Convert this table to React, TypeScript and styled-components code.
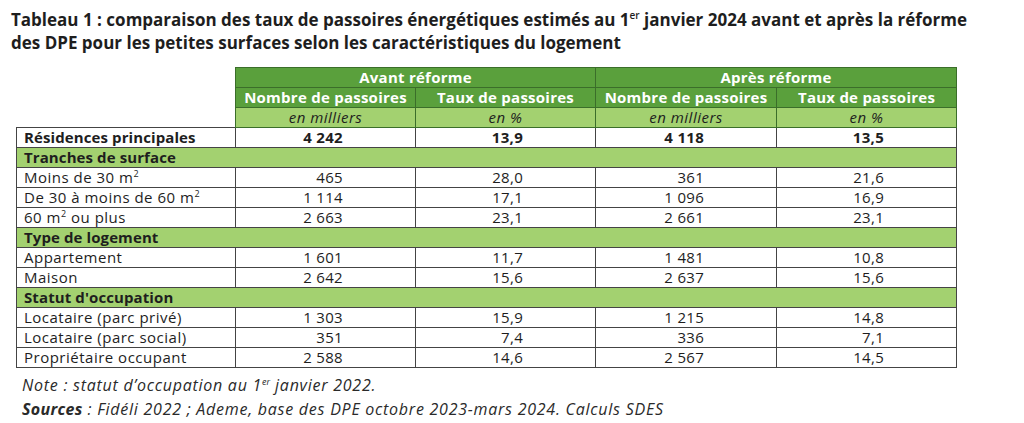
import React from "react";
import styled, { createGlobalStyle } from "styled-components";

const GlobalStyle = createGlobalStyle`
  html, body {
    margin: 0;
    padding: 0;
    background: #fff;
  }
  body {
    font-family: "Open Sans", Lato, sans-serif;
    color: #1e1e1e;
  }
`;

const Page = styled.div`
  width: 1024px;
  height: 423px;
  padding: 8px 0 0 11px;
  box-sizing: border-box;
  overflow: hidden;
`;

const Title = styled.h1`
  margin: 0 0 13px;
  font-size: 17px;
  line-height: 23px;
  font-weight: 700;
  color: #1e1e1e;
  white-space: nowrap;
  sup {
    font-size: 10px;
    line-height: 0;
    vertical-align: 7px;
    font-weight: 600;
  }
`;

const Table = styled.table`
  margin-left: 5px;
  border-collapse: collapse;
  table-layout: fixed;
  width: 940px;
  font-size: 15px;
  td,
  th {
    height: 19px;
    padding: 0;
    line-height: 19px;
    white-space: nowrap;
  }
`;

const Blank = styled.th`
  border: none;
  background: #fff;
`;

const GroupHead = styled.th<{ $shade: "dark" | "light" }>`
  background: ${(p) => (p.$shade === "dark" ? "#5aa03c" : "#a3d170")};
  color: ${(p) => (p.$shade === "dark" ? "#fff" : "#1e1e1e")};
  font-weight: ${(p) => (p.$shade === "dark" ? 700 : 400)};
  font-style: ${(p) => (p.$shade === "dark" ? "normal" : "italic")};
  letter-spacing: ${(p) => (p.$shade === "dark" ? "0.25px" : "0.5px")};
  border: 1px solid #3b6e2a;
  text-align: center;
`;

const Label = styled.td<{ $bold?: boolean }>`
  border: 1px solid #444;
  padding-left: 7px !important;
  font-weight: ${(p) => (p.$bold ? 700 : 400)};
  letter-spacing: ${(p) => (p.$bold ? "0.1px" : "0.5px")};
  sup {
    font-size: 9px;
    line-height: 0;
    vertical-align: 6px;
  }
`;

const Value = styled.td<{ $bold?: boolean }>`
  border: 1px solid #444;
  text-align: right;
  padding-right: 72px !important;
  font-weight: ${(p) => (p.$bold ? 700 : 400)};
  letter-spacing: 0.3px;
`;

const Section = styled.td`
  background: #a3d170;
  border: 1px solid #444;
  font-weight: 700;
  letter-spacing: 0.1px;
  padding-left: 7px !important;
`;

const Notes = styled.div`
  margin: 5px 0 0 11px;
  font-size: 16px;
  letter-spacing: 0.75px;
  font-style: italic;
  line-height: 24px;
  color: #2a2a2a;
  sup {
    font-size: 9px;
    line-height: 0;
    vertical-align: 6px;
    letter-spacing: 0;
  }
  b {
    font-weight: 700;
    letter-spacing: 0.3px;
  }
`;

type Row = { label: React.ReactNode; values: string[] };
type Group = { title: string; rows: Row[] };

const m2 = (
  <>
    m<sup>2</sup>
  </>
);

const groups: Group[] = [
  {
    title: "Tranches de surface",
    rows: [
      { label: <>Moins de 30 {m2}</>, values: ["465", "28,0", "361", "21,6"] },
      { label: <>De 30 à moins de 60 {m2}</>, values: ["1 114", "17,1", "1 096", "16,9"] },
      { label: <>60 {m2} ou plus</>, values: ["2 663", "23,1", "2 661", "23,1"] },
    ],
  },
  {
    title: "Type de logement",
    rows: [
      { label: "Appartement", values: ["1 601", "11,7", "1 481", "10,8"] },
      { label: "Maison", values: ["2 642", "15,6", "2 637", "15,6"] },
    ],
  },
  {
    title: "Statut d'occupation",
    rows: [
      { label: "Locataire (parc privé)", values: ["1 303", "15,9", "1 215", "14,8"] },
      { label: "Locataire (parc social)", values: ["351", "7,4", "336", "7,1"] },
      { label: "Propriétaire occupant", values: ["2 588", "14,6", "2 567", "14,5"] },
    ],
  },
];

export default function App() {
  return (
    <Page>
      <GlobalStyle />
      <Title>
        Tableau 1 : comparaison des taux de passoires énergétiques estimés au 1<sup>er</sup> janvier 2024 avant et après la réforme
        <br />
        des DPE pour les petites surfaces selon les caractéristiques du logement
      </Title>
      <Table>
        <colgroup>
          <col style={{ width: 219 }} />
          <col style={{ width: 180 }} />
          <col style={{ width: 180 }} />
          <col style={{ width: 181 }} />
          <col style={{ width: 180 }} />
        </colgroup>
        <thead>
          <tr>
            <Blank />
            <GroupHead $shade="dark" colSpan={2}>Avant réforme</GroupHead>
            <GroupHead $shade="dark" colSpan={2}>Après réforme</GroupHead>
          </tr>
          <tr>
            <Blank />
            <GroupHead $shade="dark">Nombre de passoires</GroupHead>
            <GroupHead $shade="dark">Taux de passoires</GroupHead>
            <GroupHead $shade="dark">Nombre de passoires</GroupHead>
            <GroupHead $shade="dark">Taux de passoires</GroupHead>
          </tr>
          <tr>
            <Blank />
            <GroupHead $shade="light">en milliers</GroupHead>
            <GroupHead $shade="light">en %</GroupHead>
            <GroupHead $shade="light">en milliers</GroupHead>
            <GroupHead $shade="light">en %</GroupHead>
          </tr>
        </thead>
        <tbody>
          <tr>
            <Label $bold>Résidences principales</Label>
            {["4 242", "13,9", "4 118", "13,5"].map((v, i) => (
              <Value $bold key={i}>{v}</Value>
            ))}
          </tr>
          {groups.map((g) => (
            <React.Fragment key={g.title}>
              <tr>
                <Section colSpan={5}>{g.title}</Section>
              </tr>
              {g.rows.map((r, ri) => (
                <tr key={ri}>
                  <Label>{r.label}</Label>
                  {r.values.map((v, i) => (
                    <Value key={i}>{v}</Value>
                  ))}
                </tr>
              ))}
            </React.Fragment>
          ))}
        </tbody>
      </Table>
      <Notes>
        <div>
          Note : statut d’occupation au 1<sup>er</sup> janvier 2022.
        </div>
        <div>
          <b>Sources</b> : Fidéli 2022 ; Ademe, base des DPE octobre 2023-mars 2024. Calculs SDES
        </div>
      </Notes>
    </Page>
  );
}
